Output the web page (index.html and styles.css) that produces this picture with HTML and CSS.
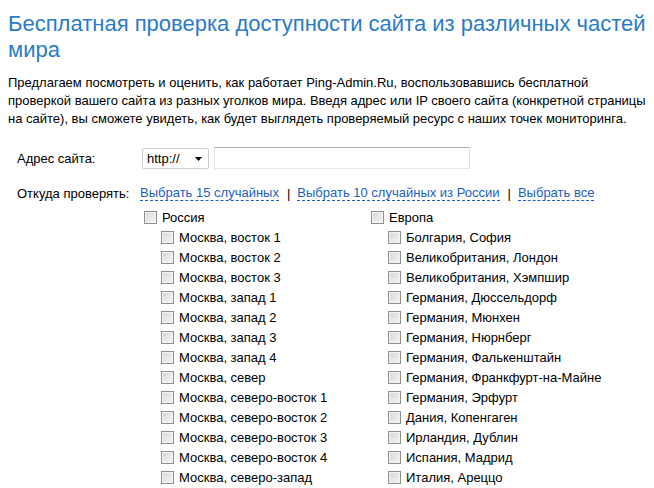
FILE: index.html
```html
<!DOCTYPE html>
<html lang="ru">
<head>
<meta charset="utf-8">
<title>Ping-Admin</title>
<link rel="stylesheet" href="styles.css">
</head>
<body>
<h1 class="title">Бесплатная проверка доступности сайта из различных частей мира</h1>
<p class="intro">Предлагаем посмотреть и оценить, как работает Ping-Admin.Ru, воспользовавшись бесплатной проверкой вашего сайта из разных уголков мира. Введя адрес или IP своего сайта (конкретной страницы на сайте), вы сможете увидеть, как будет выглядеть проверяемый ресурс с наших точек мониторинга.</p>
<div class="form">
  <div class="row row-addr">
    <div class="label">Адрес сайта:</div>
    <div class="controls">
      <div class="select-wrap">
        <select class="proto"><option>http://</option><option>https://</option></select>
        <svg class="arrow" width="7" height="4" viewBox="0 0 7 4"><path d="M0 0h7L3.5 4z" fill="#000"/></svg>
      </div>
      <input class="url" type="text">
    </div>
  </div>
  <div class="row row-from">
    <div class="label">Откуда проверять:</div>
    <div class="controls links">
      <a class="dlink" href="#">Выбрать 15 случайных</a>
      <span class="sep">|</span>
      <a class="dlink" href="#">Выбрать 10 случайных из России</a>
      <span class="sep">|</span>
      <a class="dlink" href="#">Выбрать все</a>
    </div>
  </div>
  <div class="tree">
    <div class="group">
      <label class="item head"><input type="checkbox" class="cb">Россия</label>
      <label class="item"><input type="checkbox" class="cb">Москва, восток 1</label>
      <label class="item"><input type="checkbox" class="cb">Москва, восток 2</label>
      <label class="item"><input type="checkbox" class="cb">Москва, восток 3</label>
      <label class="item"><input type="checkbox" class="cb">Москва, запад 1</label>
      <label class="item"><input type="checkbox" class="cb">Москва, запад 2</label>
      <label class="item"><input type="checkbox" class="cb">Москва, запад 3</label>
      <label class="item"><input type="checkbox" class="cb">Москва, запад 4</label>
      <label class="item"><input type="checkbox" class="cb">Москва, север</label>
      <label class="item"><input type="checkbox" class="cb">Москва, северо-восток 1</label>
      <label class="item"><input type="checkbox" class="cb">Москва, северо-восток 2</label>
      <label class="item"><input type="checkbox" class="cb">Москва, северо-восток 3</label>
      <label class="item"><input type="checkbox" class="cb">Москва, северо-восток 4</label>
      <label class="item"><input type="checkbox" class="cb">Москва, северо-запад</label>
    </div>
    <div class="group">
      <label class="item head"><input type="checkbox" class="cb">Европа</label>
      <label class="item"><input type="checkbox" class="cb">Болгария, София</label>
      <label class="item"><input type="checkbox" class="cb">Великобритания, Лондон</label>
      <label class="item"><input type="checkbox" class="cb">Великобритания, Хэмпшир</label>
      <label class="item"><input type="checkbox" class="cb">Германия, Дюссельдорф</label>
      <label class="item"><input type="checkbox" class="cb">Германия, Мюнхен</label>
      <label class="item"><input type="checkbox" class="cb">Германия, Нюрнберг</label>
      <label class="item"><input type="checkbox" class="cb">Германия, Фалькенштайн</label>
      <label class="item"><input type="checkbox" class="cb">Германия, Франкфурт-на-Майне</label>
      <label class="item"><input type="checkbox" class="cb">Германия, Эрфурт</label>
      <label class="item"><input type="checkbox" class="cb">Дания, Копенгаген</label>
      <label class="item"><input type="checkbox" class="cb">Ирландия, Дублин</label>
      <label class="item"><input type="checkbox" class="cb">Испания, Мадрид</label>
      <label class="item"><input type="checkbox" class="cb">Италия, Ареццо</label>
    </div>
  </div>
</div>
</body>
</html>
```
FILE: styles.css
```css
body {
  margin: 8px;
  font-family: "Liberation Sans", Arial, sans-serif;
  font-size: 13px;
  color: #000;
  background: #fff;
}
.title {
  margin: 0;
  padding-top: 3px;
  font-size: 22px;
  font-weight: normal;
  line-height: 26px;
  color: #2b7bc6;
}
.intro {
  margin: 11px 0 0;
  line-height: 18px;
}
.form {
  margin-top: 19px;
}
.row {
  display: flex;
  align-items: center;
}
.label {
  width: 125px;
  padding-left: 9px;
}
.controls {
  display: flex;
  align-items: center;
}
.row-addr {
  height: 22px;
}
.select-wrap {
  position: relative;
  width: 67px;
  height: 21px;
}
.proto {
  appearance: none;
  -webkit-appearance: none;
  width: 67px;
  height: 21px;
  margin: 0;
  padding: 0 0 0 4px;
  border: 1px solid #cfcfcf;
  border-radius: 2px;
  background: #fff;
  font-family: inherit;
  font-size: 13px;
  color: #000;
}
.arrow {
  position: absolute;
  right: 7px;
  top: 9px;
  pointer-events: none;
}
.url {
  width: 256px;
  height: 22px;
  box-sizing: border-box;
  margin: 0 0 0 5px;
  padding: 0 3px;
  border: 1px solid;
  border-color: #abadb3 #dbdfe6 #e3e9ef #e2e3ea;
  font-family: inherit;
  font-size: 13px;
}
.row-from {
  margin-top: 15px;
  height: 18px;
}
.links {
  margin-left: -2px;
}
.dlink {
  color: #1d5fbf;
  text-decoration: none;
  border-bottom: 1px dashed #1d5fbf;
  line-height: 15px;
}
.sep {
  margin: 0 7px 0 8px;
}
.tree {
  display: grid;
  grid-template-columns: 227px 240px;
  margin: 5px 0 0 136px;
}
.item {
  display: flex;
  align-items: center;
  height: 20px;
  padding-left: 17px;
}
.item.head {
  padding-left: 0;
}
.cb {
  appearance: none;
  -webkit-appearance: none;
  width: 13px;
  height: 13px;
  margin: 0 5px 0 0;
  border: 1px solid #8e8f8f;
  background: linear-gradient(135deg, #d6d6d6 0%, #f6f6f6 100%);
  box-shadow: inset 0 0 0 1px #f4f4f4;
  flex: none;
}
```
